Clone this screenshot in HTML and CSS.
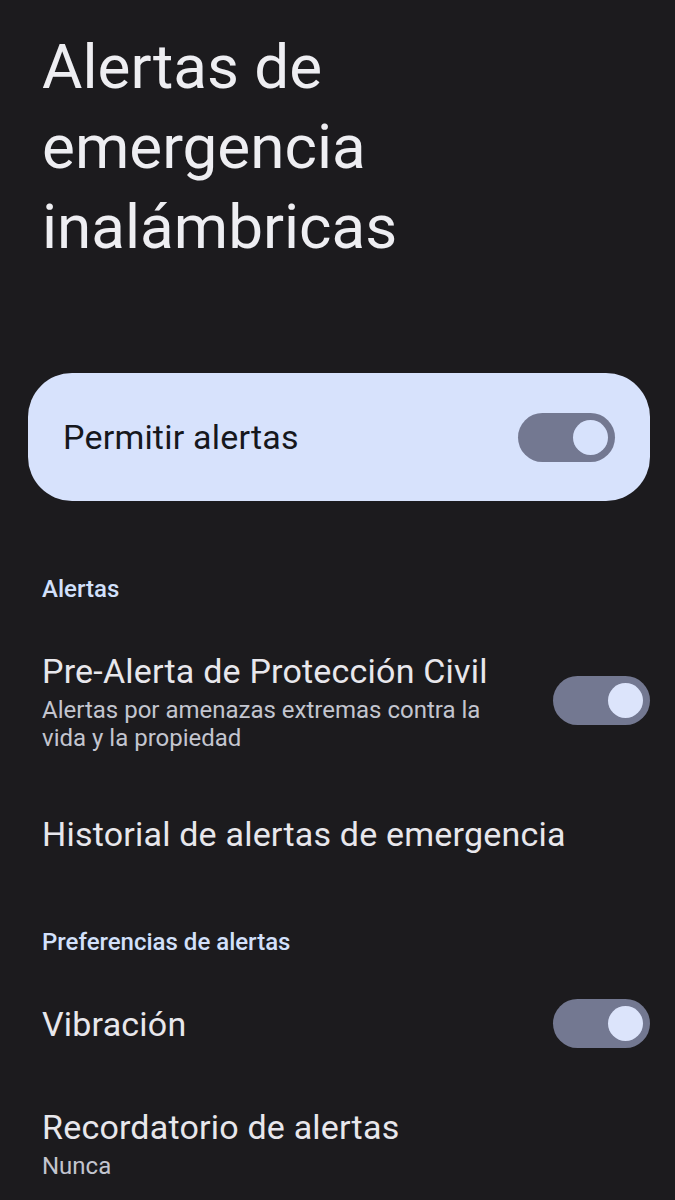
FILE: index.html
```html
<!DOCTYPE html>
<html lang="es">
<head>
<meta charset="utf-8">
<link rel="stylesheet" href="styles.css">
</head>
<body>
<main class="screen">
  <h1 class="title">Alertas de emergencia inalámbricas</h1>

  <div class="main-card">
    <span class="main-label">Permitir alertas</span>
    <span class="switch switch-card"><span class="thumb"></span></span>
  </div>

  <h2 class="section">Alertas</h2>

  <div class="row row-pre">
    <div class="texts">
      <div class="row-title">Pre-Alerta de Protección Civil</div>
      <div class="row-sub">Alertas por amenazas extremas contra la vida y la propiedad</div>
    </div>
    <span class="switch"><span class="thumb"></span></span>
  </div>

  <div class="row row-hist">
    <div class="texts">
      <div class="row-title">Historial de alertas de emergencia</div>
    </div>
  </div>

  <h2 class="section section-pref">Preferencias de alertas</h2>

  <div class="row row-vib">
    <div class="texts">
      <div class="row-title">Vibración</div>
    </div>
    <span class="switch"><span class="thumb"></span></span>
  </div>

  <div class="row row-rec">
    <div class="texts">
      <div class="row-title">Recordatorio de alertas</div>
      <div class="row-sub">Nunca</div>
    </div>
  </div>
</main>
</body>
</html>
```

FILE: styles.css
```css
html, body {
  margin: 0;
  padding: 0;
  background: #1c1b1e;
}
body {
  font-family: Roboto, "Noto Sans", sans-serif;
  color: #e6e5ea;
  width: 675px;
  height: 1200px;
  overflow: hidden;
}
.screen {
  display: flex;
  flex-direction: column;
}
.title {
  margin: 27px 0 0 42px;
  font-size: 62px;
  font-weight: 400;
  line-height: 80px;
  color: #eeeef2;
  width: 440px;
}
.main-card {
  margin: 106px 25px 0 28px;
  height: 128px;
  border-radius: 44px;
  background: #d7e2fc;
  display: flex;
  align-items: center;
  justify-content: space-between;
  padding: 0 35px;
  box-sizing: border-box;
}
.main-label {
  font-size: 34px;
  letter-spacing: 0.2px;
  color: #16181d;
}
.switch {
  width: 97px;
  height: 49px;
  border-radius: 25px;
  background: #737891;
  display: flex;
  align-items: center;
  justify-content: flex-end;
  padding-right: 7px;
  box-sizing: border-box;
  flex-shrink: 0;
}
.thumb {
  width: 35px;
  height: 35px;
  border-radius: 50%;
  background: #dce4fb;
}
.switch-card .thumb {
  background: #d7e2fc;
}
.section {
  margin: 73px 0 0 42px;
  font-size: 24px;
  font-weight: 500;
  color: #d2e0fb;
  line-height: 30px;
}
.row {
  display: flex;
  align-items: center;
  justify-content: space-between;
  padding: 0 25px 0 42px;
}
.row-title {
  font-size: 34px;
  line-height: 44px;
  letter-spacing: 0.2px;
  color: #e8e7ec;
}
.row-sub {
  margin-top: 3px;
  font-size: 24px;
  line-height: 28px;
  color: #c3c5cf;
}
.row-pre {
  margin-top: 45px;
}
.row-pre .texts {
  width: 480px;
}
.row-hist {
  margin-top: 60px;
}
.section-pref {
  margin-top: 71px;
}
.row-vib {
  margin-top: 42px;
}
.row-rec {
  margin-top: 57px;
}
```
